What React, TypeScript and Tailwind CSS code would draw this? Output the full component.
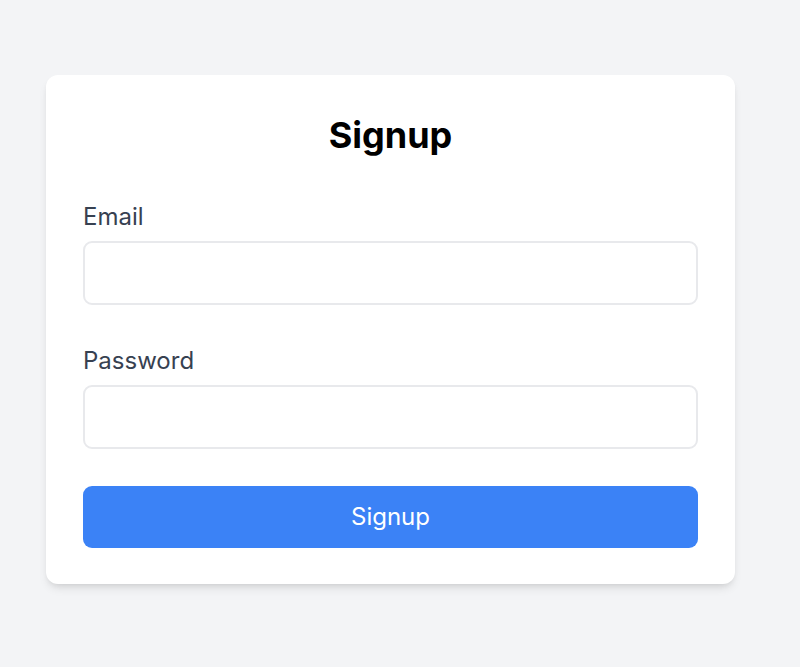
import React from "react";

export default function App() {
  return (
    <div
      className="min-h-[667px] w-full bg-[#f3f4f6] pt-[75px] pl-[46px]"
      style={{ fontFamily: "Inter, 'Noto Sans', sans-serif" }}
    >
      <div className="w-[689px] rounded-[12px] bg-white px-[37px] pt-[36px] pb-[36px] shadow-[0_6px_10px_-2px_rgba(0,0,0,0.1),0_3px_6px_-3px_rgba(0,0,0,0.1)]">
        <h1 className="text-center text-[36px] leading-[48px] font-bold text-black">Signup</h1>
        <div className="mt-[40px]">
          <label className="block text-[24px] leading-[36px] text-[#374151]">Email</label>
          <input
            type="email"
            className="mt-[6px] block h-[64px] w-full rounded-[9px] border-2 border-[#e8e9ec] bg-white px-[12px] text-[24px] outline-none"
          />
        </div>
        <div className="mt-[38px]">
          <label className="block text-[24px] leading-[36px] text-[#374151]">Password</label>
          <input
            type="password"
            className="mt-[6px] block h-[64px] w-full rounded-[9px] border-2 border-[#e8e9ec] bg-white px-[12px] text-[24px] outline-none"
          />
        </div>
        <button className="mt-[37px] block h-[62px] w-full rounded-[9px] bg-[#3b82f6] text-[24px] text-white">
          Signup
        </button>
      </div>
    </div>
  );
}
